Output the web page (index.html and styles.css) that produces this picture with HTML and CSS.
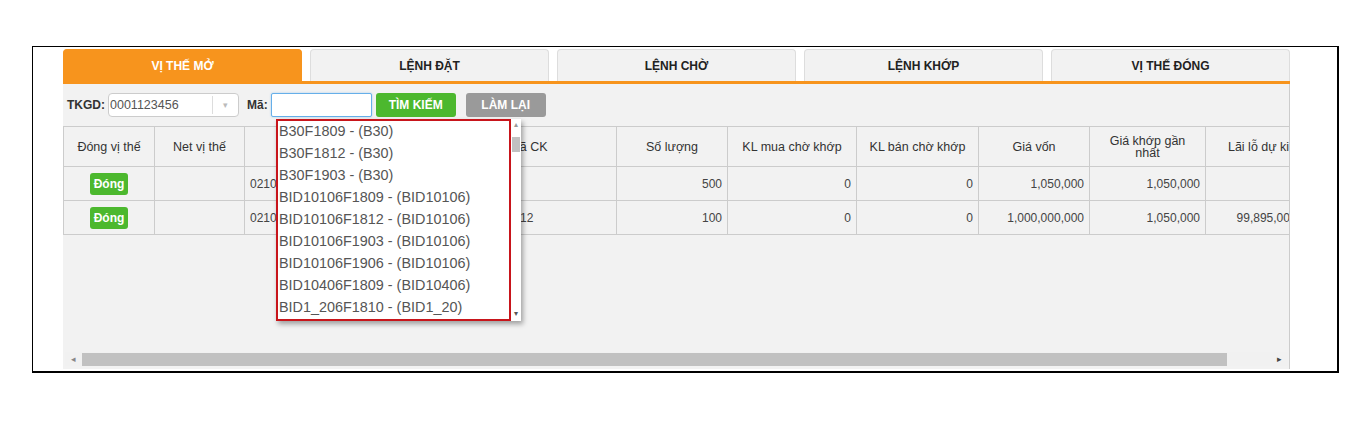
FILE: index.html
```html
<!DOCTYPE html>
<html lang="vi">
<head>
  <meta charset="UTF-8" />
  <title>Vị thế mở</title>
  <link rel="stylesheet" href="styles.css">
</head>
<body>
  <div class="frame">
    <div class="panel">
      <div class="tabs">
        <div class="tab active">VỊ THẾ MỞ</div>
        <div class="tab">LỆNH ĐẶT</div>
        <div class="tab">LỆNH CHỜ</div>
        <div class="tab">LỆNH KHỚP</div>
        <div class="tab">VỊ THẾ ĐÓNG</div>
      </div>

      <div class="content">
        <div class="toolbar">
          <label class="lbl">TKGD:</label>
          <div class="select">
            <span class="select-val">0001123456</span>
            <span class="select-arrow">&#9662;</span>
          </div>
          <label class="lbl lbl-ma">Mã:</label>
          <input type="text" class="code-input">
          <button class="btn btn-green">TÌM KIẾM</button>
          <button class="btn btn-grey">LÀM LẠI</button>
        </div>

        <div class="grid-wrap">
          <table class="grid">
            <colgroup>
              <col style="width:91px"><col style="width:90px"><col style="width:196px">
              <col style="width:176px"><col style="width:111px"><col style="width:129px">
              <col style="width:122px"><col style="width:111px"><col style="width:116px">
              <col style="width:120px">
            </colgroup>
            <thead>
              <tr>
                <th>Đóng vị thế</th>
                <th>Net vị thế</th>
                <th>Số tài khoản</th>
                <th>Mã CK</th>
                <th>Số lượng</th>
                <th>KL mua chờ khớp</th>
                <th>KL bán chờ khớp</th>
                <th>Giá vốn</th>
                <th>Giá khớp gần<br>nhất</th>
                <th>Lãi lỗ dự kiến</th>
              </tr>
            </thead>
            <tbody>
              <tr>
                <td class="c"><span class="btn-close">Đóng</span></td>
                <td></td>
                <td>0210001123456</td>
                <td>B30F1809</td>
                <td class="r">500</td>
                <td class="r">0</td>
                <td class="r">0</td>
                <td class="r">1,050,000</td>
                <td class="r">1,050,000</td>
                <td class="r"></td>
              </tr>
              <tr>
                <td class="c"><span class="btn-close">Đóng</span></td>
                <td></td>
                <td>0210001123456</td>
                <td>BID10106F1812</td>
                <td class="r">100</td>
                <td class="r">0</td>
                <td class="r">0</td>
                <td class="r">1,000,000,000</td>
                <td class="r">1,050,000</td>
                <td class="r">99,895,000,000</td>
              </tr>
            </tbody>
          </table>
        </div>

        <div class="hscroll">
          <span class="arr">&#9666;</span>
          <div class="hthumb"></div>
          <span class="arr arr-r">&#9656;</span>
        </div>

        <div class="suggest">
          <ul class="suggest-list">
            <li>B30F1809 - (B30)</li>
            <li>B30F1812 - (B30)</li>
            <li>B30F1903 - (B30)</li>
            <li>BID10106F1809 - (BID10106)</li>
            <li>BID10106F1812 - (BID10106)</li>
            <li>BID10106F1903 - (BID10106)</li>
            <li>BID10106F1906 - (BID10106)</li>
            <li>BID10406F1809 - (BID10406)</li>
            <li>BID1_206F1810 - (BID1_20)</li>
          </ul>
          <div class="vscroll">
            <span class="varr">&#9652;</span>
            <div class="vthumb"></div>
            <span class="varr varr-d">&#9662;</span>
          </div>
        </div>
      </div>
    </div>
  </div>
</body>
</html>
```

FILE: styles.css
```css
body {
  margin: 0;
  background: #fff;
  font-family: "Liberation Sans", Arial, sans-serif;
  font-size: 12px;
  color: #333;
}
.frame {
  margin: 46px 0 0 32px;
  width: 1274px;
  height: 322px;
  border-top: 1px solid #000;
  border-left: 1px solid #000;
  border-right: 2px solid #000;
  border-bottom: 2px solid #000;
  padding: 2px 0 0 30px;
  box-sizing: content-box;
}
.panel {
  width: 1227px;
}
.tabs {
  display: flex;
  gap: 8px;
  height: 32px;
  border-bottom: 3px solid #f7941d;
}
.tab {
  width: 239px;
  box-sizing: border-box;
  background: #f2f2f2;
  border: 1px solid #ddd;
  border-bottom: none;
  border-radius: 4px 4px 0 0;
  font-weight: bold;
  font-size: 12px;
  text-align: center;
  line-height: 33px;
  color: #222;
}
.tab.active {
  background: #f7941d;
  border-color: #f7941d;
  color: #fff;
}
.content {
  position: relative;
  height: 285px;
  background: #f2f2f2;
  border-right: 1px solid #ccc;
  display: flex;
  flex-direction: column;
}
.toolbar {
  display: flex;
  align-items: center;
  height: 24px;
  margin: 9px 0 0 4px;
}
.lbl {
  font-weight: bold;
  font-size: 12px;
  color: #333;
  margin-right: 3px;
}
.lbl-ma {
  margin-left: 8px;
}
.select {
  display: flex;
  width: 131px;
  height: 24px;
  box-sizing: border-box;
  background: #fff;
  border: 1px solid #ccc;
  border-radius: 4px;
}
.select-val {
  flex: 1;
  line-height: 22px;
  padding-left: 1px;
  font-size: 12.5px;
  color: #555;
}
.select-arrow {
  width: 25px;
  border-left: 1px solid #ddd;
  margin: 2px 0;
  text-align: center;
  line-height: 18px;
  color: #bbb;
  font-size: 9px;
}
.code-input {
  width: 101px;
  height: 24px;
  box-sizing: border-box;
  border: 1px solid #66afe9;
  box-shadow: 0 0 2px rgba(102, 175, 233, 0.6);
  border-radius: 2px;
  margin: 0 4px 0 0;
  padding: 0;
}
.btn {
  width: 80px;
  height: 24px;
  border: none;
  border-radius: 3px;
  color: #fff;
  font-family: "Liberation Sans", Arial, sans-serif;
  font-weight: bold;
  font-size: 12px;
  padding: 0;
}
.btn-green {
  background: #4cb82e;
  margin-right: 10px;
}
.btn-grey {
  background: #9a9a9a;
}
.grid-wrap {
  margin-top: 9px;
  overflow: hidden;
  width: 1226px;
}
.grid {
  border-collapse: collapse;
  table-layout: fixed;
  width: 1262px;
}
.grid th,
.grid td {
  border: 1px solid #ccc;
  padding: 0 5px;
  white-space: nowrap;
  overflow: hidden;
}
.grid th {
  height: 39px;
  font-weight: normal;
  font-size: 12.5px;
  color: #333;
  text-align: center;
  line-height: 12px;
}
.grid td {
  height: 33px;
  color: #444;
  font-size: 12px;
}
.grid td.r { text-align: right; }
.grid td.c { text-align: center; }
.btn-close {
  display: inline-block;
  width: 38px;
  height: 22px;
  line-height: 22px;
  background: #4cb82e;
  color: #fff;
  font-weight: bold;
  border-radius: 3px;
}
.hscroll {
  margin: auto 1px 3px 2px;
  height: 14px;
  display: flex;
  align-items: center;
  background: #f1f1f1;
}
.arr {
  width: 17px;
  text-align: center;
  color: #888;
  font-size: 9px;
}
.hthumb {
  width: 1145px;
  height: 13px;
  background: #c1c1c1;
}
.arr-r {
  margin-left: auto;
  color: #444;
}
.suggest {
  position: absolute;
  left: 213px;
  top: 35px;
  display: flex;
  background: #fff;
  box-shadow: 2px 3px 5px rgba(0, 0, 0, 0.35);
}
.suggest-list {
  list-style: none;
  margin: 0;
  padding: 0 0 1px 1px;
  width: 230px;
  height: 197px;
  border: 2px solid #c8151b;
  overflow: hidden;
}
.suggest-list li {
  height: 22px;
  line-height: 22px;
  font-size: 14.4px;
  color: #555;
  white-space: nowrap;
}
.suggest-list li:first-child {
  margin-top: -1px;
}
.vscroll {
  width: 10px;
  display: flex;
  flex-direction: column;
  align-items: center;
}
.varr {
  font-size: 8px;
  color: #999;
  line-height: 10px;
  margin-top: 1px;
}
.vthumb {
  width: 8px;
  height: 15px;
  background: #c1c1c1;
  margin-top: 7px;
}
.varr-d {
  margin-top: auto;
  margin-bottom: 2px;
  color: #555;
}
```
